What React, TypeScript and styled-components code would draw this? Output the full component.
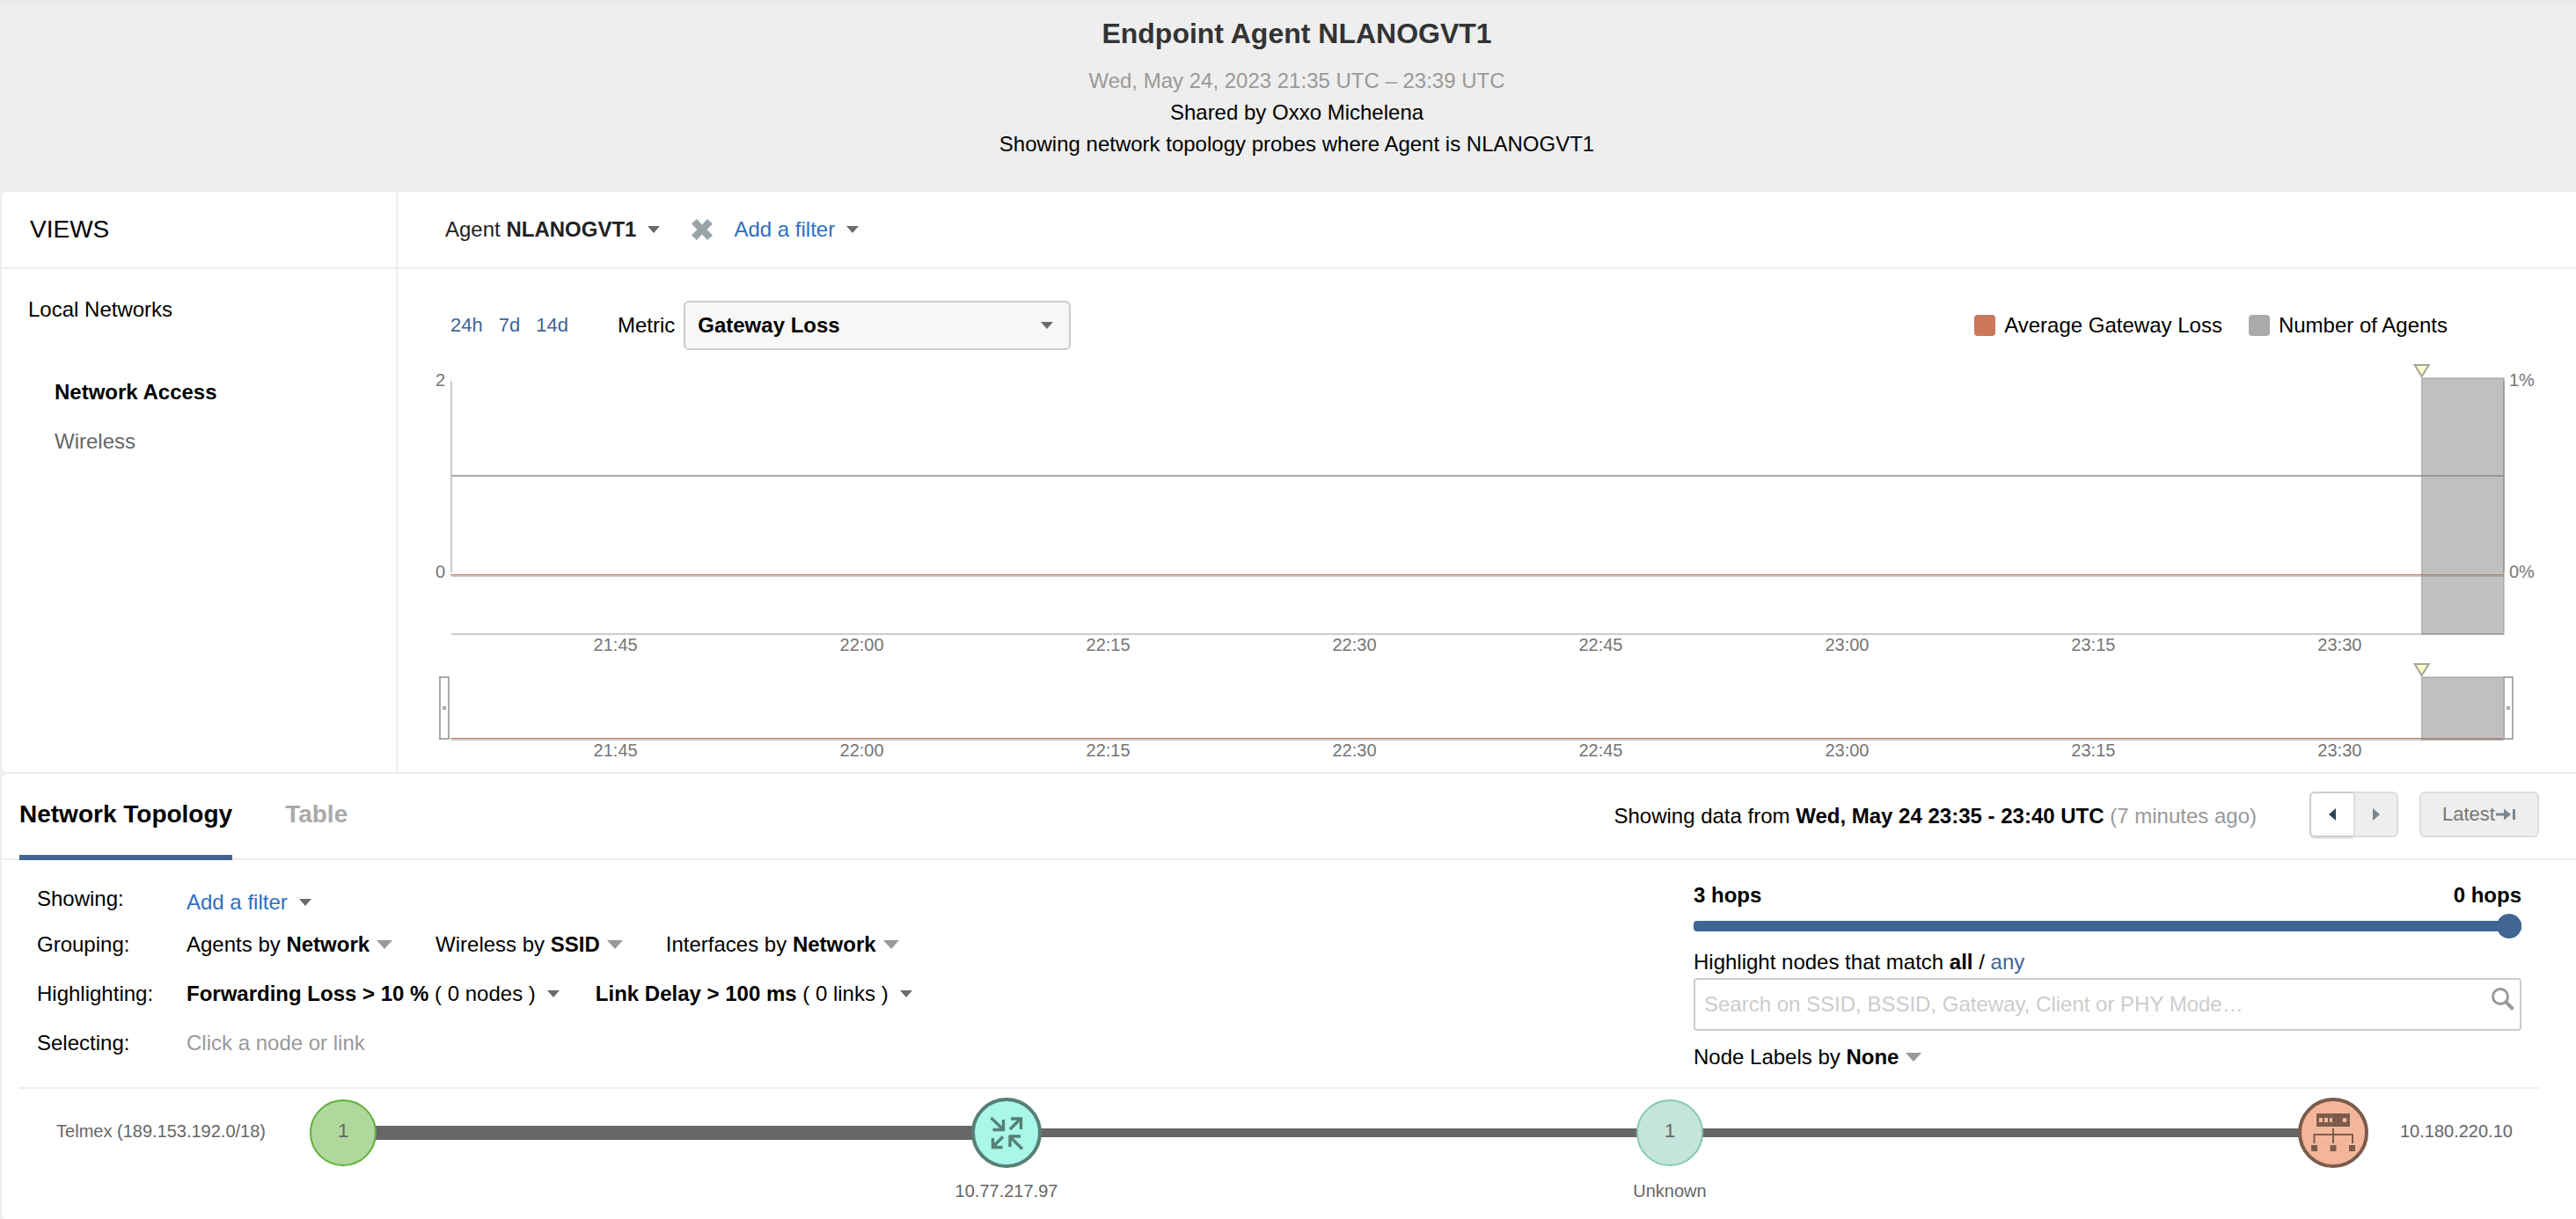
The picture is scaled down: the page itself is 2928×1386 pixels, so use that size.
import React, { useState } from "react";
import styled, { createGlobalStyle } from "styled-components";

const Global = createGlobalStyle`
  *, *::before, *::after { box-sizing: border-box; }
  body {
    margin: 0;
    background: #fff;
    color: #000;
    font-family: "Liberation Sans", Arial, Helvetica, sans-serif;
    font-size: 24px;
    line-height: 36px;
  }
  button, input, select { font: inherit; color: inherit; margin: 0; }
`;

const Page = styled.div`
  background: #eee;
  padding-left: 2px;
`;

/* ---------- page header ---------- */

const Banner = styled.header`
  margin-left: -2px;
  padding: 18px 0 36px 20px;
  text-align: center;
  background: linear-gradient(#e6e6e6, #eee 6px);
`;

const Title = styled.h1`
  margin: 0 0 16px;
  font-size: 32px;
  line-height: 40px;
  color: #333;
`;

const BannerLine = styled.p<{ $muted?: boolean }>`
  margin: 0;
  color: ${(p) => (p.$muted ? "#999" : "#000")};
`;

/* ---------- shared controls ---------- */

const PlainButton = styled.button<{ $tone?: string }>`
  display: inline-flex;
  align-items: center;
  padding: 0;
  border: 0;
  background: none;
  color: ${(p) => p.$tone ?? "#000"};
  line-height: 28px;
  white-space: pre;
  cursor: pointer;
`;

const DropButton = styled(PlainButton)<{ $gap?: number }>`
  gap: ${(p) => p.$gap ?? 13}px;
`;

const TextLink = styled.a`
  color: #406597;
  text-decoration: none;
`;

function Caret({ large }: { large?: boolean }) {
  return large ? (
    <svg width="18" height="10" viewBox="0 0 18 10" aria-hidden="true">
      <path d="M0 0H18L9 10Z" fill="#999" />
    </svg>
  ) : (
    <svg width="14" height="8" viewBox="0 0 14 8" aria-hidden="true">
      <path d="M0 0H14L7 8Z" fill="#6b6b6b" />
    </svg>
  );
}

/* ---------- upper panel ---------- */

const Panel = styled.section`
  background: #fff;
  border-radius: 6px 0 0 6px;
`;

const UpperPanel = styled(Panel)`
  display: grid;
  grid-template-columns: 450px minmax(0, 1fr);
  margin-bottom: 2px;
`;

const Sidebar = styled.nav`
  border-right: 2px solid #eee;
`;

const PanelHead = styled.div`
  display: flex;
  align-items: center;
  height: 88px;
  border-bottom: 2px solid #eee;
`;

const SideHead = styled(PanelHead)`
  padding-left: 32px;
`;

const SideTitle = styled.h2`
  margin: 0;
  font-size: 28px;
  font-weight: 400;
`;

const SideGroup = styled.h3`
  margin: 18px 0 38px 30px;
  font-size: 24px;
  font-weight: 400;
  line-height: 56px;
`;

const SideList = styled.ul`
  margin: 0;
  padding: 0 0 0 60px;
  list-style: none;
`;

const SideLink = styled.a<{ $active?: boolean }>`
  display: block;
  line-height: 56px;
  text-decoration: none;
  font-weight: ${(p) => (p.$active ? 700 : 400)};
  color: ${(p) => (p.$active ? "#000" : "#666")};
`;

const FilterHead = styled(PanelHead)`
  padding-left: 54px;
`;

const RemoveButton = styled(PlainButton)`
  margin: 0 24px 0 36px;
`;

const ChartTools = styled.div`
  display: flex;
  align-items: center;
  margin: 36px 146px 16px 60px;
`;

const Ranges = styled.div`
  display: flex;
  gap: 18px;
  margin-right: 56px;
  font-size: 22px;
`;

const MetricLabel = styled.label`
  margin-right: 10px;
`;

const SelectWrap = styled.div`
  display: grid;
  align-items: center;
  width: 440px;
  & > * { grid-area: 1 / 1; }
  & > svg { justify-self: end; margin-right: 20px; pointer-events: none; }
`;

const Select = styled.select`
  appearance: none;
  width: 100%;
  height: 56px;
  padding: 0 14px;
  border: 2px solid #ccc;
  border-radius: 6px;
  background: #f7f7f7;
  font-weight: 700;
`;

const Legend = styled.ul`
  display: flex;
  gap: 30px;
  margin: 0 0 0 auto;
  padding: 0;
  list-style: none;
`;

const LegendItem = styled.li<{ $color: string }>`
  display: flex;
  align-items: center;
  gap: 10px;
  &::before {
    content: "";
    width: 24px;
    height: 24px;
    border-radius: 4px;
    background: ${(p) => p.$color};
  }
`;

const ChartGrid = styled.div`
  display: grid;
  grid-template-columns: 61px minmax(0, 1fr) 82px;
  padding-bottom: 14px;
  font-size: 20px;
  line-height: 22px;
  color: #757575;
`;

const Scale = styled.div<{ $side: "left" | "right" }>`
  display: flex;
  flex-direction: column;
  justify-content: space-between;
  height: 247px;
  padding: ${(p) => (p.$side === "left" ? "7px 7px 0 0" : "7px 0 0 6px")};
  text-align: ${(p) => (p.$side === "left" ? "right" : "left")};
`;

const Plot = styled.svg`
  display: block;
  width: 100%;
  overflow: visible;
`;

const Times = styled.div`
  grid-column: 2;
  display: grid;
  grid-template-columns: repeat(8, 1fr);
  padding: 0 2%;
  text-align: center;
`;

const OverviewCell = styled.div`
  grid-column: 2;
  margin-top: 10px;
`;

const TIMES = ["21:45", "22:00", "22:15", "22:30", "22:45", "23:00", "23:15", "23:30"];

function TimeAxis() {
  return (
    <Times>
      {TIMES.map((t) => (
        <span key={t}>{t}</span>
      ))}
    </Times>
  );
}

function Selection({ height }: { height: number }) {
  return (
    <>
      <rect x="96%" y="16" width="4%" height={height} fill="#888" fillOpacity="0.53" stroke="#888" strokeOpacity="0.4" strokeWidth="2" />
      <svg x="96%" y="0" overflow="visible">
        <path d="M-8 1H8L0 14Z" fill="#ffc" stroke="#a5a598" strokeWidth="2" />
      </svg>
    </>
  );
}

function Handle({ at, dx }: { at: string; dx: number }) {
  return (
    <svg x={at} y="0" overflow="visible">
      <rect x={dx} y="16" width="10" height="70" fill="#fff" stroke="#aaa" strokeWidth="2" />
      <rect x={dx + 3} y="49" width="4" height="4" fill="#aaa" />
    </svg>
  );
}

function Timeline() {
  return (
    <ChartGrid>
      <Scale $side="left">
        <span>2</span>
        <span>0</span>
      </Scale>
      <Plot height="308" role="img" aria-label="Gateway loss and number of agents over time">
        <path d="M0 19V237" stroke="#ccc" strokeWidth="2" />
        <line x1="0" x2="100%" y1="127" y2="127" stroke="#aaa" strokeWidth="2" />
        <line x1="0" x2="100%" y1="241" y2="241" stroke="#ccc" strokeWidth="2" />
        <line x1="-1" x2="100%" y1="239.5" y2="239.5" stroke="#cb775c" />
        <line x1="0" x2="100%" y1="307" y2="307" stroke="#ccc" strokeWidth="2" />
        <line x1="100%" x2="100%" y1="19" y2="237" stroke="#bbb" strokeWidth="2" />
        <Selection height={291} />
      </Plot>
      <Scale $side="right">
        <span>1%</span>
        <span>0%</span>
      </Scale>
      <TimeAxis />
      <OverviewCell>
        <Plot height="88" role="img" aria-label="Timeline overview">
          <line x1="0" x2="100%" y1="87" y2="87" stroke="#ccc" strokeWidth="2" />
          <line x1="-1" x2="100%" y1="85.5" y2="85.5" stroke="#cb775c" />
          <Selection height={71} />
          <Handle at="0" dx={-13} />
          <Handle at="100%" dx={0} />
        </Plot>
      </OverviewCell>
      <TimeAxis />
    </ChartGrid>
  );
}

/* ---------- lower panel ---------- */

const TabBar = styled.div`
  display: flex;
  align-items: stretch;
  height: 98px;
  padding: 0 42px 0 20px;
  border-bottom: 2px solid #eee;
`;

const Tabs = styled.div`
  display: flex;
  gap: 60px;
  margin-right: auto;
`;

const Tab = styled.button<{ $active?: boolean }>`
  height: 98px;
  padding: 0;
  border: 0;
  border-bottom: 6px solid ${(p) => (p.$active ? "#406594" : "transparent")};
  background: none;
  font-size: 28px;
  font-weight: 700;
  color: ${(p) => (p.$active ? "#000" : "#aaa")};
`;

const RoundStatus = styled.p`
  margin: 0;
  line-height: 96px;
`;

const Muted = styled.span`
  color: #999;
`;

const Pager = styled.div`
  display: flex;
  align-self: flex-start;
  margin: 20px 24px 0 60px;
`;

const StepButton = styled.button`
  display: grid;
  place-items: center;
  height: 52px;
  padding: 0;
`;

const PreviousButton = styled(StepButton)`
  width: 50px;
  border: 2px solid #ccc;
  border-right: 0;
  border-radius: 6px 0 0 6px;
  background: #fff;
  box-shadow: 0 2px 0 #e8e8e8;
`;

const NextButton = styled(StepButton)`
  width: 51px;
  border: 2px solid #ddd;
  border-radius: 0 6px 6px 0;
  background: #eee;
`;

const LatestButton = styled.button`
  display: inline-flex;
  align-items: center;
  justify-content: center;
  align-self: flex-start;
  width: 136px;
  height: 52px;
  margin-top: 20px;
  padding: 0;
  border: 2px solid #ddd;
  border-radius: 6px;
  background: #eee;
  color: #777;
  font-size: 22px;
`;

const Controls = styled.div`
  display: grid;
  grid-template-columns: minmax(0, 1fr) 941px;
  margin: 0 42px 0 20px;
  padding: 20px 20px 20px;
  border-bottom: 2px solid #eee;
`;

const Row = styled.div<{ $height: number }>`
  display: grid;
  grid-template-columns: 170px 1fr;
  height: ${(p) => p.$height}px;
  line-height: ${(p) => p.$height}px;
`;

const RowItems = styled.div<{ $gap?: number }>`
  display: flex;
  align-items: center;
  gap: ${(p) => p.$gap ?? 0}px;
  height: 56px;
`;

const SidePane = styled.div`
  display: flex;
  flex-direction: column;
`;

const Hops = styled.div`
  display: flex;
  justify-content: space-between;
  height: 41px;
  line-height: 40px;
  font-weight: 700;
`;

const Range = styled.input`
  appearance: none;
  width: 100%;
  height: 28px;
  background: transparent;
  &::-webkit-slider-runnable-track {
    height: 12px;
    border-radius: 4px;
    background: #406594;
  }
  &::-webkit-slider-thumb {
    appearance: none;
    width: 28px;
    height: 28px;
    margin-top: -8px;
    border-radius: 50%;
    background: #406594;
  }
`;

const MatchLine = styled.div`
  margin-top: 9px;
`;

const SearchBox = styled.label`
  display: flex;
  align-items: flex-start;
  height: 60px;
  border: 2px solid #ccc;
  border-radius: 4px;
  & > svg { margin: 9px 6px 0 0; }
`;

const SearchInput = styled.input`
  flex: 1;
  height: 56px;
  padding: 0 10px;
  border: 0;
  outline: 0;
  background: none;
  &::placeholder { color: #ccc; opacity: 1; }
`;

const LabelBy = styled.div`
  display: flex;
  margin-top: 16px;
`;

/* ---------- topology ---------- */

const Topology = styled.div`
  display: flex;
  align-items: center;
  height: 148px;
  padding-bottom: 48px;
  font-size: 20px;
  line-height: 24px;
  color: #666;
`;

const StartLabel = styled.div`
  width: 348px;
  padding: 0 48px 4px 0;
  text-align: right;
`;

const EndLabel = styled.div`
  width: 236px;
  padding: 0 0 4px 36px;
`;

const Link = styled.div<{ $weight: number }>`
  flex: 1;
  height: ${(p) => p.$weight}px;
  margin: 0 -4px;
  background: #666;
`;

const NodeBox = styled.div`
  position: relative;
  display: grid;
  place-items: center;
  width: 80px;
  height: 80px;
`;

const NodeButton = styled.button<{ $size: number; $ring: number; $fill: string; $edge: string }>`
  display: grid;
  place-items: center;
  width: ${(p) => p.$size}px;
  height: ${(p) => p.$size}px;
  padding: 0 0 4px;
  border: ${(p) => p.$ring}px solid ${(p) => p.$edge};
  border-radius: 50%;
  background: ${(p) => p.$fill};
  font-size: 22px;
  line-height: 24px;
  color: #666;
`;

const IconNode = styled(NodeButton)`
  padding: 0;
`;

const NodeLabel = styled.span`
  position: absolute;
  top: 94px;
  left: 50%;
  transform: translateX(-50%);
  white-space: nowrap;
`;

function GatewayIcon() {
  return (
    <svg width="38" height="38" viewBox="0 0 38 38" fill="none" stroke="#567f76" strokeWidth="3.4" aria-hidden="true">
      <path d="M1.500 2L15 15M15.500 4V16.500M3.500 15.500H17" />
      <path d="M23 15L34.500 3.500M24 3H37M35.500 2V15" />
      <path d="M15 23.500L4 34.500M3.500 25V37M2 35.500H14.500" />
      <path d="M37 37.500L23.500 24M23 35V22M22 23H35" />
    </svg>
  );
}

function ServerIcon() {
  return (
    <svg width="50" height="44" viewBox="0 0 50 44" fill="#7b5c4c" aria-hidden="true">
      <path d="M6 0H44V15H6ZM9 5V10H13V5ZM15 5V10H19V5ZM21 5V10H24V5ZM38 5A2.500 2.500 0 1 0 38 10A2.500 2.500 0 1 0 38 5Z" fillRule="evenodd" />
      <path d="M24 17H26V23H48V34H46V25H26V34H24V25H4.500V34H2.500V23H24Z" />
      <path d="M0 36H7V43H0ZM21.500 36H28.500V43H21.500ZM43 36H50V43H43Z" />
    </svg>
  );
}

export default function App() {
  const [hops, setHops] = useState(3);
  return (
    <>
      <Global />
      <Page>
        <Banner>
          <Title>Endpoint Agent NLANOGVT1</Title>
          <BannerLine $muted>Wed, May 24, 2023 21:35 UTC – 23:39 UTC</BannerLine>
          <BannerLine>Shared by Oxxo Michelena</BannerLine>
          <BannerLine>Showing network topology probes where Agent is NLANOGVT1</BannerLine>
        </Banner>

        <UpperPanel>
          <Sidebar>
            <SideHead>
              <SideTitle>VIEWS</SideTitle>
            </SideHead>
            <SideGroup>Local Networks</SideGroup>
            <SideList>
              <li><SideLink href="#network" $active>Network Access</SideLink></li>
              <li><SideLink href="#wireless">Wireless</SideLink></li>
            </SideList>
          </Sidebar>
          <div>
            <FilterHead>
              <DropButton $tone="#222">
                <span>Agent <b>NLANOGVT1</b></span>
                <Caret />
              </DropButton>
              <RemoveButton aria-label="Remove filter">
                <svg width="24" height="24" viewBox="0 0 24 24" fill="#99a4a9" aria-hidden="true">
                  <path d="M6 0L12 6.500L18 0L24 5.500L17.500 12L24 18.500L18 24L12 17.500L6 24L0 18.500L6.500 12L0 5.500Z" />
                </svg>
              </RemoveButton>
              <DropButton $tone="#2b70c4">
                Add a filter
                <Caret />
              </DropButton>
            </FilterHead>
            <ChartTools>
              <Ranges>
                <TextLink href="#24h">24h</TextLink>
                <TextLink href="#7d">7d</TextLink>
                <TextLink href="#14d">14d</TextLink>
              </Ranges>
              <MetricLabel htmlFor="metric">Metric</MetricLabel>
              <SelectWrap>
                <Select id="metric">
                  <option>Gateway Loss</option>
                </Select>
                <Caret />
              </SelectWrap>
              <Legend>
                <LegendItem $color="#cb775c">Average Gateway Loss</LegendItem>
                <LegendItem $color="#aaa">Number of Agents</LegendItem>
              </Legend>
            </ChartTools>
            <Timeline />
          </div>
        </UpperPanel>

        <Panel>
          <TabBar>
            <Tabs role="tablist">
              <Tab role="tab" aria-selected="true" $active>Network Topology</Tab>
              <Tab role="tab" aria-selected="false">Table</Tab>
            </Tabs>
            <RoundStatus>
              Showing data from <b>Wed, May 24 23:35 - 23:40 UTC</b> <Muted>(7 minutes ago)</Muted>
            </RoundStatus>
            <Pager>
              <PreviousButton aria-label="Previous round">
                <svg width="8" height="14" viewBox="0 0 8 14" aria-hidden="true"><path d="M8 0V14L0 7Z" fill="#2f4650" /></svg>
              </PreviousButton>
              <NextButton disabled aria-label="Next round">
                <svg width="8" height="14" viewBox="0 0 8 14" aria-hidden="true"><path d="M0 0V14L8 7Z" fill="#78878d" /></svg>
              </NextButton>
            </Pager>
            <LatestButton disabled>
              Latest
              <svg width="24" height="14" viewBox="0 0 24 14" fill="#78878d" aria-hidden="true">
                <path d="M1 5.500H10V0.500L18 7L10 13.500V8.500H1ZM20 1H23V13H20Z" />
              </svg>
            </LatestButton>
          </TabBar>

          <Controls>
            <div>
              <Row $height={48}>
                <span>Showing:</span>
                <RowItems>
                  <DropButton $tone="#2b70c4">Add a filter<Caret /></DropButton>
                </RowItems>
              </Row>
              <Row $height={56}>
                <span>Grouping:</span>
                <RowItems $gap={49}>
                  <DropButton $gap={8}><span>Agents by <b>Network</b></span><Caret large /></DropButton>
                  <DropButton $gap={8}><span>Wireless by <b>SSID</b></span><Caret large /></DropButton>
                  <DropButton $gap={8}><span>Interfaces by <b>Network</b></span><Caret large /></DropButton>
                </RowItems>
              </Row>
              <Row $height={56}>
                <span>Highlighting:</span>
                <RowItems $gap={41}>
                  <DropButton><span><b>Forwarding Loss &gt; 10 %</b> ( 0 nodes )</span><Caret /></DropButton>
                  <DropButton><span><b>Link Delay &gt; 100 ms</b> ( 0 links )</span><Caret /></DropButton>
                </RowItems>
              </Row>
              <Row $height={56}>
                <span>Selecting:</span>
                <Muted>Click a node or link</Muted>
              </Row>
            </div>
            <SidePane>
              <Hops>
                <label htmlFor="hops">3 hops</label>
                <span>0 hops</span>
              </Hops>
              <Range id="hops" type="range" min={0} max={3} value={hops} onChange={(e) => setHops(Number(e.target.value))} />
              <MatchLine>
                Highlight nodes that match <b>all</b> / <TextLink href="#any">any</TextLink>
              </MatchLine>
              <SearchBox>
                <SearchInput type="text" aria-label="Highlight nodes" placeholder="Search on SSID, BSSID, Gateway, Client or PHY Mode…" />
                <svg width="26" height="26" viewBox="0 0 26 26" fill="none" stroke="#999" aria-hidden="true">
                  <circle cx="10" cy="10" r="8.5" strokeWidth="3" />
                  <path d="M16 16L24.500 24.500" strokeWidth="4" />
                </svg>
              </SearchBox>
              <LabelBy>
                <DropButton $gap={8}><span>Node Labels by <b>None</b></span><Caret large /></DropButton>
              </LabelBy>
            </SidePane>
          </Controls>

          <Topology>
            <StartLabel>Telmex (189.153.192.0/18)</StartLabel>
            <NodeBox>
              <NodeButton $size={76} $ring={2} $fill="#b0d89c" $edge="#60b13a">1</NodeButton>
            </NodeBox>
            <Link $weight={16} />
            <NodeBox>
              <IconNode $size={80} $ring={4} $fill="#a8f7e8" $edge="#567f76" aria-label="Gateway 10.77.217.97"><GatewayIcon /></IconNode>
              <NodeLabel>10.77.217.97</NodeLabel>
            </NodeBox>
            <Link $weight={10} />
            <NodeBox>
              <NodeButton $size={76} $ring={2} $fill="#c5e4db" $edge="#86c8b5">1</NodeButton>
              <NodeLabel>Unknown</NodeLabel>
            </NodeBox>
            <Link $weight={10} />
            <NodeBox>
              <IconNode $size={80} $ring={4} $fill="#f4b69a" $edge="#7b5c4c" aria-label="Server 10.180.220.10"><ServerIcon /></IconNode>
            </NodeBox>
            <EndLabel>10.180.220.10</EndLabel>
          </Topology>
        </Panel>
      </Page>
    </>
  );
}
